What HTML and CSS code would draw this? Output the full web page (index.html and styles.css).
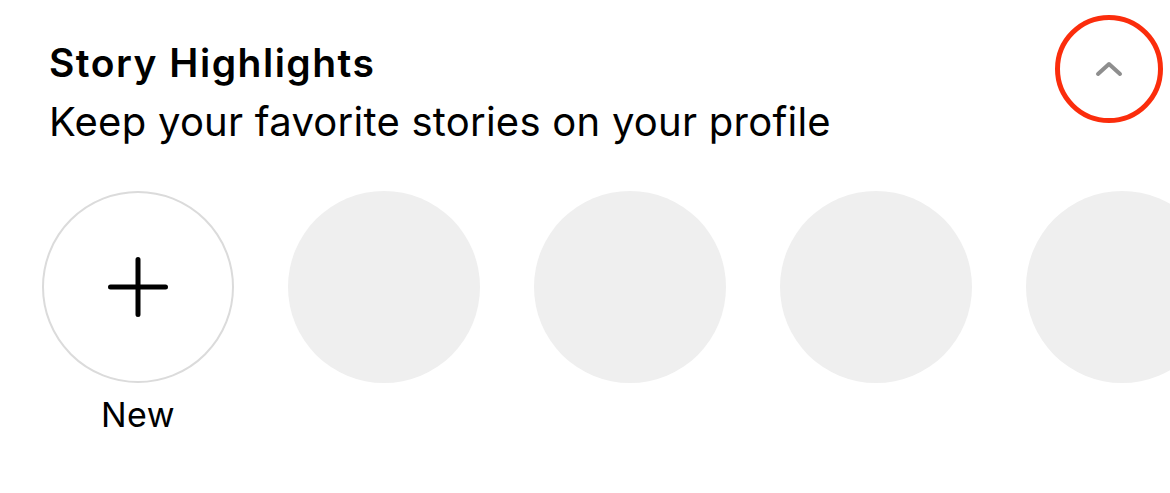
FILE: index.html
```html
<!DOCTYPE html>
<html lang="en">
<head>
    <meta charset="UTF-8">
    <meta name="viewport" content="width=device-width, initial-scale=1.0">
    <title>Story Highlights</title>
    <link rel="stylesheet" href="styles.css">
</head>
<body>
    <div class="highlights">
        <div class="highlights-header">
            <div class="header-text">
                <h2 class="title">Story Highlights</h2>
                <p class="subtitle">Keep your favorite stories on your profile</p>
            </div>
            <button class="collapse-btn" aria-label="Collapse">
                <svg width="28" height="16" viewBox="0 0 28 16">
                    <path d="M3 13 L14 3 L25 13" fill="none" stroke="#8e8e8e" stroke-width="4" stroke-linecap="round" stroke-linejoin="round"/>
                </svg>
                <span class="marker"></span> <!-- red annotation ring -->
            </button>
        </div>

        <div class="highlight-row">
            <div class="highlight">
                <div class="circle new-circle">
                    <svg width="64" height="64" viewBox="0 0 64 64">
                        <path d="M32 4.5 V59.5 M4.5 32 H59.5" stroke="#000" stroke-width="5" stroke-linecap="round"/>
                    </svg>
                </div>
                <span class="label">New</span>
            </div>
            <div class="highlight"><div class="circle empty"></div></div>
            <div class="highlight"><div class="circle empty"></div></div>
            <div class="highlight"><div class="circle empty"></div></div>
            <div class="highlight"><div class="circle empty"></div></div>
        </div>
    </div>
</body>
</html>
```

FILE: styles.css
```css
body {
    font-family: Inter, "Noto Sans", Arial, sans-serif;
    background-color: #ffffff;
    margin: 0;
    padding: 0;
    color: #000;
    overflow: hidden;
}
.highlights {
    width: 1170px;
    height: 493px;
    overflow: hidden;
}
.highlights-header {
    display: flex;
    justify-content: space-between;
    align-items: flex-start;
    padding: 37px 33px 0 49px;
}
.title {
    margin: 0;
    font-size: 39px;
    font-weight: 600;
    line-height: 52px;
    letter-spacing: 1.5px;
}
.subtitle {
    margin: 0;
    font-size: 40px;
    font-weight: 400;
    line-height: 66px;
    letter-spacing: 0.25px;
}
.collapse-btn {
    position: relative;
    width: 56px;
    height: 56px;
    margin-top: 4px;
    border: none;
    background: none;
    padding: 0;
    display: flex;
    align-items: center;
    justify-content: center;
}
.marker {
    position: absolute;
    left: -26px;
    top: -26px;
    width: 98px;
    height: 98px;
    border: 5px solid #fb2d0c;
    border-radius: 50%;
}
.highlight-row {
    display: flex;
    gap: 54px;
    padding: 36px 0 0 42px;
}
.highlight {
    display: flex;
    flex-direction: column;
    align-items: center;
    flex-shrink: 0;
}
.circle {
    width: 192px;
    height: 192px;
    border-radius: 50%;
    box-sizing: border-box;
    flex-shrink: 0;
}
.new-circle {
    border: 2px solid #dbdbdb;
    display: flex;
    align-items: center;
    justify-content: center;
}
.empty {
    background-color: #efefef;
}
.label {
    margin-top: 12px;
    font-size: 34px;
    line-height: 40px;
    letter-spacing: 0.5px;
}
```
